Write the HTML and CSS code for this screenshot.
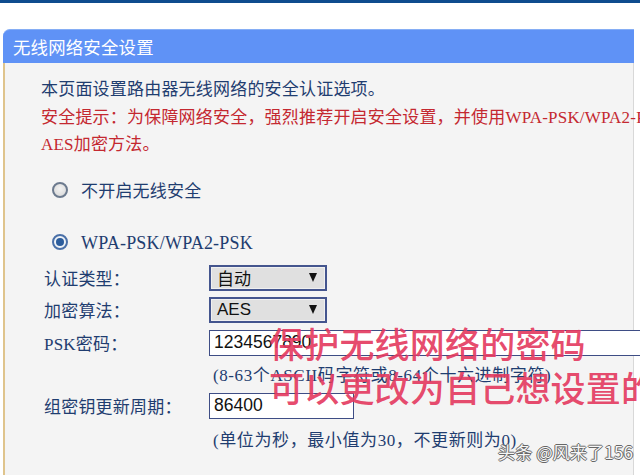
FILE: index.html
```html
<!DOCTYPE html>
<html>
<head>
    <meta charset="utf-8">
    <title>无线网络安全设置</title>
    <link rel="stylesheet" href="styles.css">
</head>
<body>
    <div class="topbar"></div>

    <div class="page">
        <div class="panel">
            <div class="panel-title">无线网络安全设置</div>
            <div class="panel-body">
                <p class="intro">
                    本页面设置路由器无线网络的安全认证选项。<br>
                    <span class="warn">安全提示：为保障网络安全，强烈推荐开启安全设置，并使用WPA-PSK/WPA2-PSK和<br>AES加密方法。</span>
                </p>

                <div class="radio-row radio-off">
                    <span class="radio"></span>
                    <span>不开启无线安全</span>
                </div>
                <div class="radio-row radio-wpa">
                    <span class="radio checked"></span>
                    <span class="wpa">WPA-PSK/WPA2-PSK</span>
                </div>

                <div class="field field-auth">
                    <span class="label">认证类型：</span>
                    <div class="select">自动<span class="arrow"></span></div>
                </div>
                <div class="field field-cipher">
                    <span class="label">加密算法：</span>
                    <div class="select">AES<span class="arrow"></span></div>
                </div>
                <div class="field field-psk">
                    <span class="label">PSK密码：</span>
                    <input class="text-input psk" type="text" value="1234567890">
                </div>
                <div class="hint hint-psk">(8-63个ASCII码字符或8-64个十六进制字符)</div>
                <div class="field field-period">
                    <span class="label">组密钥更新周期：</span>
                    <input class="text-input period" type="text" value="86400">
                </div>
                <div class="hint hint-period">(单位为秒，最小值为30，不更新则为0)</div>
            </div>
        </div>
    </div>

    <!-- caption pasted over the screenshot -->
    <div class="note">保护无线网络的密码<br>可以更改为自己想设置的</div>
    <div class="watermark">头条 @风来了156</div>
</body>
</html>
```

FILE: styles.css
```css
html, body {
    margin: 0;
    height: 475px;
    overflow: hidden;
    background: #fff;
}

body {
    position: relative;
    font-family: "Liberation Serif", "Noto Sans CJK SC", serif;
    font-size: 17px;
    letter-spacing: 0.2px;
    color: #1f3d70;
}

.topbar {
    height: 3px;
    background-color: #0f4c8e;
}

.page {
    padding: 26px 0 0 3px;
}

.panel {
    width: 631px;
}

.panel-title {
    height: 34px;
    line-height: 34px;
    padding-left: 10px;
    background-color: #5f92f6;
    border-top: 1px solid #86aef5;
    box-sizing: border-box;
    border-top-left-radius: 7px;
    color: #fff;
    font-family: "Noto Sans CJK SC", sans-serif;
    font-size: 17.4px;
}

.panel-body {
    height: 412px;
    padding: 13px 0 0 36px;
    background-color: #f4f4f4;
    border-left: 2px solid #dfc48c;
    border-right: 1px solid #d8d8d8;
    white-space: nowrap;
}

.intro {
    margin: 0;
    line-height: 27.5px;
}

.warn {
    color: #c42830;
}

.radio-row {
    display: flex;
    align-items: center;
    height: 26px;
    padding-left: 11px;
}

.radio-off {
    margin-top: 18px;
}

.radio-wpa {
    margin-top: 26px;
}

.radio {
    flex-shrink: 0;
    width: 12px;
    height: 12px;
    margin-right: 13px;
    border: 2px solid #6c7a8e;
    border-radius: 50%;
    background: radial-gradient(circle at 50% 40%, #f2f2f2, #d6d6d6);
    position: relative;
}

.radio.checked {
    border-color: #4a70a8;
    background: #eef2f7;
}

.radio.checked::after {
    content: "";
    position: absolute;
    left: 2px;
    top: 2px;
    width: 8px;
    height: 8px;
    border-radius: 50%;
    background-color: #2b5c9c;
}

.wpa {
    font-size: 18px;
    padding-top: 3px;
}

.field {
    display: flex;
    align-items: center;
    height: 26px;
    padding-left: 3px;
}

.field-auth {
    margin-top: 10px;
}

.field-cipher {
    margin-top: 6px;
}

.field-psk {
    margin-top: 7px;
}

.field-period {
    margin-top: 4px;
}

.label {
    flex-shrink: 0;
    width: 165px;
}

.select {
    flex-shrink: 0;
    display: flex;
    align-items: center;
    justify-content: space-between;
    width: 118px;
    height: 26px;
    box-sizing: border-box;
    padding: 0 8px 0 6px;
    border: 2px solid #44558e;
    box-shadow: inset 0 0 0 1px #f0f0f0;
    background-color: #e0e0e0;
    color: #111;
    font-family: "Liberation Sans", "Noto Sans CJK SC", sans-serif;
    letter-spacing: 0;
}

.arrow {
    width: 0;
    height: 0;
    border-left: 4.5px solid transparent;
    border-right: 4.5px solid transparent;
    border-top: 9px solid #111;
}

.text-input {
    flex-shrink: 0;
    height: 26px;
    box-sizing: border-box;
    margin: 0;
    padding: 0 4px;
    border: 1.5px solid #3e4d85;
    background-color: #fff;
    color: #111;
    font-family: "Liberation Sans", sans-serif;
    font-size: 17.5px;
    outline: none;
}

.text-input.psk {
    width: 460px;
}

.text-input.period {
    width: 145px;
}

.hint {
    height: 26px;
    line-height: 26px;
    margin-left: 172px;
    letter-spacing: 0.6px;
}

.hint-psk {
    margin-top: 7px;
}

.hint-period {
    margin-top: 9px;
}

.note {
    position: absolute;
    left: 269px;
    top: 321px;
    font-family: "Noto Sans CJK SC", sans-serif;
    font-size: 35px;
    font-weight: 500;
    line-height: 44px;
    color: rgba(228, 58, 96, 0.92);
    white-space: nowrap;
}

.watermark {
    position: absolute;
    left: 498px;
    top: 441px;
    font-family: "Noto Sans CJK SC", sans-serif;
    font-size: 17px;
    line-height: 22px;
    color: #f6f6f6;
    text-shadow: 1px 0 0 #666, -1px 0 0 #666, 0 1px 0 #666, 0 -1px 0 #666;
    white-space: nowrap;
}
```
